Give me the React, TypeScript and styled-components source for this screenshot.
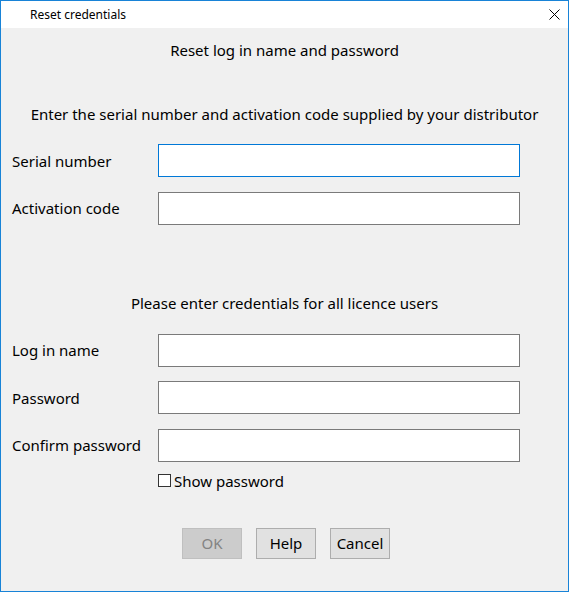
import styled, { createGlobalStyle } from "styled-components";

const Global = createGlobalStyle`
  html, body {
    margin: 0;
    padding: 0;
    background: #ffffff;
  }
  * {
    box-sizing: border-box;
  }
`;

const Window = styled.div`
  width: 569px;
  height: 592px;
  border: 1px solid #1883d7;
  background: #f0f0f0;
  display: flex;
  flex-direction: column;
  font-family: "Noto Sans", "Open Sans", sans-serif;
  color: #000;
`;

const TitleBar = styled.div`
  height: 27px;
  background: #ffffff;
  display: flex;
  align-items: center;
  justify-content: space-between;
  padding-left: 29px;
  padding-right: 8px;
  font-size: 12px;
`;

const CloseButton = styled.div`
  width: 12px;
  height: 12px;
  display: flex;
  align-items: center;
  justify-content: center;
`;

const Body = styled.div`
  flex: 1;
  display: flex;
  flex-direction: column;
  padding: 12px 0 0 11px;
  font-size: 15px;
`;

const Caption = styled.div<{ $top: number }>`
  height: 20px;
  line-height: 20px;
  margin-top: ${(p) => p.$top}px;
  text-align: center;
  margin-left: -11px;
  white-space: nowrap;
`;

const Form = styled.div<{ $top: number }>`
  display: grid;
  grid-template-columns: 146px 362px;
  row-gap: 14.5px;
  margin-top: ${(p) => p.$top}px;
  align-items: center;
`;

const Label = styled.label`
  line-height: 20px;
  white-space: nowrap;
`;

const Field = styled.div<{ $focused?: boolean }>`
  height: 33px;
  background: #ffffff;
  border: 1px solid ${(p) => (p.$focused ? "#0078d7" : "#7a7a7a")};
`;

const CheckRow = styled.div`
  display: flex;
  align-items: center;
  margin: 9px 0 0 146px;
  height: 20px;
  gap: 3px;
`;

const Box = styled.span`
  width: 13px;
  height: 13px;
  border: 1px solid #333333;
  background: #ffffff;
`;

const Buttons = styled.div`
  display: flex;
  gap: 14px;
  margin: 37px 0 0 170px;
`;

const Button = styled.div<{ $disabled?: boolean }>`
  width: 60px;
  height: 31px;
  display: flex;
  align-items: center;
  justify-content: center;
  background: ${(p) => (p.$disabled ? "#cccccc" : "#e1e1e1")};
  border: 1px solid ${(p) => (p.$disabled ? "#bfbfbf" : "#adadad")};
  color: ${(p) => (p.$disabled ? "#838383" : "#000")};
`;

const App = () => {
  return (
    <>
      <Global />
      <Window>
        <TitleBar>
          <span>Reset credentials</span>
          <CloseButton>
            <svg width="11" height="11" viewBox="0 0 11 11">
              <path d="M0.5 0.5 L10.5 10.5 M10.5 0.5 L0.5 10.5" stroke="#000" strokeWidth="1" />
            </svg>
          </CloseButton>
        </TitleBar>
        <Body>
          <Caption $top={0}>Reset log in name and password</Caption>
          <Caption $top={44}>
            Enter the serial number and activation code supplied by your distributor
          </Caption>
          <Form $top={20}>
            <Label>Serial number</Label>
            <Field $focused />
            <Label>Activation code</Label>
            <Field />
          </Form>
          <Caption $top={68}>Please enter credentials for all licence users</Caption>
          <Form $top={21}>
            <Label>Log in name</Label>
            <Field />
            <Label>Password</Label>
            <Field />
            <Label>Confirm password</Label>
            <Field />
          </Form>
          <CheckRow>
            <Box />
            <span>Show password</span>
          </CheckRow>
          <Buttons>
            <Button $disabled>OK</Button>
            <Button>Help</Button>
            <Button>Cancel</Button>
          </Buttons>
        </Body>
      </Window>
    </>
  );
};

export default App;
